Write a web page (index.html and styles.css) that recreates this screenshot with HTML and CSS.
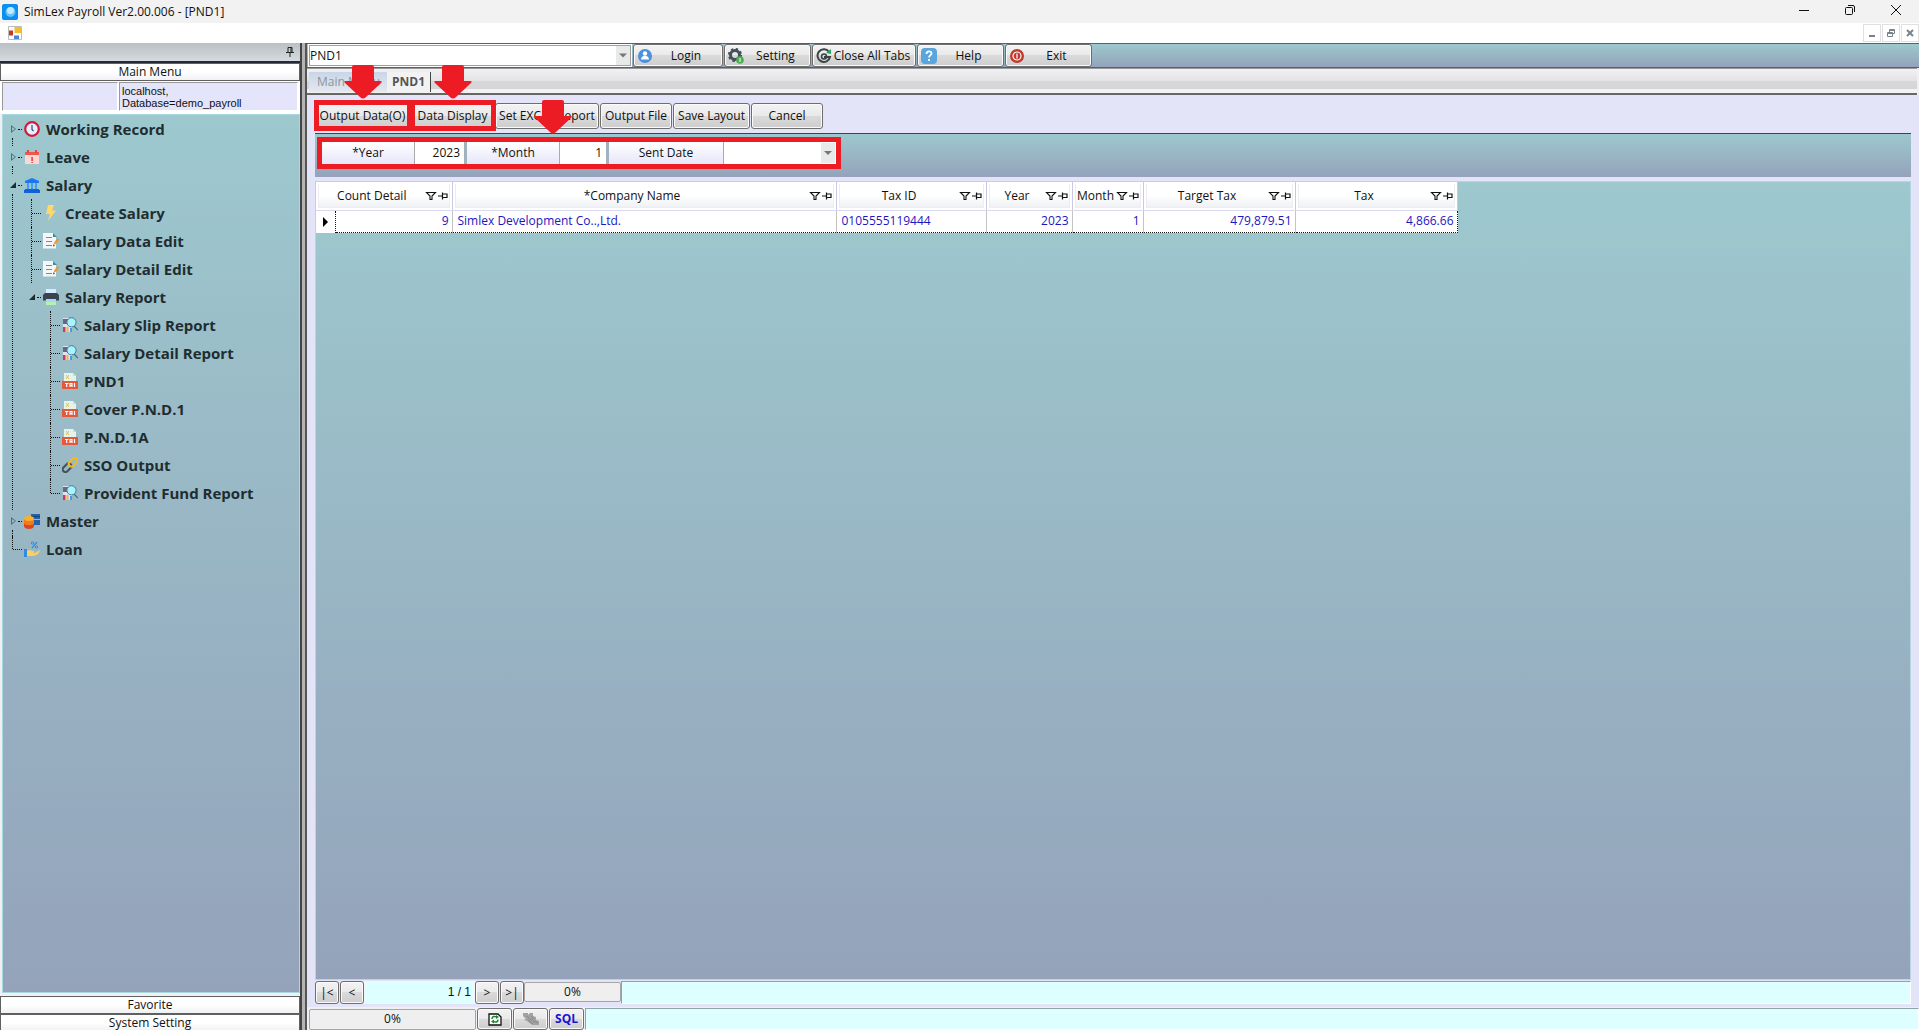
FILE: index.html
```html
<!DOCTYPE html>
<html lang="en">
<head>
  <meta charset="UTF-8">
  <meta name="viewport" content="width=device-width, initial-scale=1.0">
  <title>SimLex Payroll</title>
  <link rel="stylesheet" href="styles.css">
</head>
<body>
  <!-- shared icons -->
  <svg class="sprite" aria-hidden="true">
    <symbol id="i-clock" viewBox="0 0 16 16">
      <circle cx="8" cy="8" r="6.8" fill="#e8eefb" stroke="#d3183c" stroke-width="2.2"/>
      <path d="M8 4v4.500l1.500 1.500" fill="none" stroke="#2b4c70" stroke-width="1.200"/>
    </symbol>
    <symbol id="i-calendar" viewBox="0 0 16 16">
      <path d="M1 5h14v10H1z" fill="#fdd7d3"/>
      <path d="M1 3h14v3H1z" fill="#f0574f"/>
      <path d="M3 1h2v3H3zM11 1h2v3h-2zM7.300 8h1.600v4H7.300zM7.300 13h1.600v1H7.300z" fill="#e8453f"/>
    </symbol>
    <symbol id="i-bank" viewBox="0 0 16 16">
      <path d="M8 1l7 3v2H1V4z" fill="#1977f2"/>
      <path d="M3 6h2v6H3zM7 6h2v6H7zM11 6h2v6h-2z" fill="#3f9cff"/>
      <path d="M1 12h14v1h1v3H0v-3h1z" fill="#0f62d8"/>
    </symbol>
    <symbol id="i-bolt" viewBox="0 0 16 16">
      <path d="M5 0h6L9 5.500h4L5 16l2-7H3z" fill="#ffd868"/>
    </symbol>
    <symbol id="i-edit" viewBox="0 0 16 16">
      <path d="M0 0h10l3 3v12.500H0z" fill="#f4f6f7"/>
      <path d="M10 0l4 4h-4z" fill="#2f8f9b"/>
      <path d="M3 4.500h6M3 8.500h6M3 12.500h6" stroke="#7d8a92" stroke-width="1.200"/>
      <path d="M10.500 12l1-3 3-4 2 1.500-3.500 4z" fill="#f0962e"/>
      <path d="M10 13.500l.5-2 1.500 1z" fill="#333"/>
    </symbol>
    <symbol id="i-printer" viewBox="0 0 16 16">
      <path d="M3 0h10v5H3z" fill="#d9ecff"/>
      <path d="M2 4h12l2 2v5.500H0V6z" fill="#3b4350"/>
      <path d="M3 10h10v6H3z" fill="#a5d8f6"/>
      <path d="M3 13h10v3H3z" fill="#b9efb1"/>
    </symbol>
    <symbol id="i-report" viewBox="0 0 16 16">
      <path d="M1 1h9v14H1z" fill="#e3e1f0"/>
      <path d="M1 2h5v5H1z" fill="#6a6486"/>
      <path d="M1 10h2.500v5H1z" fill="#c93a62"/>
      <path d="M4.500 10h2v5h-2z" fill="#f3b33f"/>
      <path d="M8 11h2v4H8z" fill="#4698e6"/>
      <path d="M12 9l4 4" stroke="#44708a" stroke-width="1.200"/>
      <circle cx="9.500" cy="5.300" r="4.600" fill="#a9f3fb" stroke="#397d9b"/>
    </symbol>
    <symbol id="i-tax" viewBox="0 0 16 16">
      <path d="M2 0h9l3 3v7H2z" fill="#e6f3ea"/>
      <path d="M11 0l3 3h-3z" fill="#b8e0dd"/>
      <path d="M4 2l3 4M7 2L4 6" stroke="#d6c55c"/>
      <path d="M0 8h16v8H0z" fill="#e4593c"/>
      <path d="M3 10.500h3.500M4.700 10.500V14M8 14v-3.500h2V14M8 12.500h2M12.500 10v4" fill="none" stroke="#fff" stroke-width="1.200"/>
    </symbol>
    <symbol id="i-chain" viewBox="0 0 16 16">
      <rect x="0" y="8" width="10" height="5.500" rx="2.700" transform="rotate(-45 5 10.700)" fill="none" stroke="#47545b" stroke-width="2.200"/>
      <rect x="6" y="2.500" width="10" height="5.500" rx="2.700" transform="rotate(-45 11 5.200)" fill="none" stroke="#f6b921" stroke-width="2.200"/>
    </symbol>
    <symbol id="i-master" viewBox="0 0 16 16">
      <path d="M7 1h9v5H7zM9 7h7v5H9z" fill="#2361ab"/>
      <path d="M7 3h9v1H7z" fill="#174276"/>
      <path d="M0 6v7c0 4 10 4 10 0V6z" fill="#d8471f"/>
      <path d="M0 6v4c0 3 10 3 10 0V6z" fill="#f07a1d"/>
      <ellipse cx="5" cy="5.500" rx="5" ry="2.500" fill="#fbb02c"/>
    </symbol>
    <symbol id="i-loan" viewBox="0 0 16 16">
      <path d="M0 8h3v8H0z" fill="#2f8de0"/>
      <path d="M3 10c2-2 4 0 6 0s1 2 0 2c3 0 4-2 7-3-1 4-4 6-8 6H3z" fill="#f9cf63"/>
      <path d="M8 7l5-6" stroke="#2f8de0" stroke-width="1.200"/>
      <circle cx="8.500" cy="2" r="1.200" fill="none" stroke="#2f8de0"/>
      <circle cx="12.500" cy="6" r="1.200" fill="none" stroke="#2f8de0"/>
    </symbol>
    <symbol id="i-filter" viewBox="0 0 24 12">
      <path d="M1.500 2.500h9L7 6v3.500H5V6z" fill="none" stroke="#111" stroke-width="1.100"/>
      <path d="M13 6h4.500M17.500 2.500v7M17.500 4h4.500v3.500h-4.500" fill="none" stroke="#111" stroke-width="1.200"/>
    </symbol>
    <symbol id="i-arrow" viewBox="0 0 38 34" preserveAspectRatio="none">
      <path d="M10 0h18q2 0 2 2v14h6q3 0 1 2L22 32q-3 3-6 0L1 18q-2-2 1-2h6V2q0-2 2-2z" fill="#ed1c24"/>
    </symbol>
    <symbol id="i-drop" viewBox="0 0 8 4">
      <path d="M0 0h8L4 4z" fill="#777"/>
    </symbol>
  </svg>

  <header class="titlebar">
    <svg class="app-icon" viewBox="0 0 16 16" aria-hidden="true">
      <rect width="16" height="16" rx="2" fill="#0c8df0"/>
      <circle cx="8.500" cy="8" r="5" fill="#63c3fa"/>
      <circle cx="8.500" cy="6.500" r="3.500" fill="#bfeaff"/>
    </svg>
    <h1>SimLex Payroll Ver2.00.006 - [PND1]</h1>
    <div class="window-buttons">
      <button aria-label="Minimize"><svg viewBox="0 0 12 12"><path d="M1 6.500h10"/></svg></button>
      <button aria-label="Restore"><svg viewBox="0 0 12 12"><rect x="1.500" y="3.500" width="7" height="7" rx="1"/><path d="M4 1.500h5q1.500 0 1.500 1.500v5"/></svg></button>
      <button aria-label="Close"><svg viewBox="0 0 12 12"><path d="M1 1l10 10M11 1L1 11"/></svg></button>
    </div>
  </header>

  <div class="menubar">
    <svg class="form-icon" viewBox="0 0 14 14" aria-hidden="true">
      <path d="M.5.5h13v13H.5z" fill="#fff" stroke="#bbb"/>
      <path d="M1 4.500h4v5H1z" fill="#c23a2a"/>
      <path d="M6.500 1h6.500v6H6.500z" fill="#f3bd2f"/>
      <path d="M6 9.500h5V13H6z" fill="#4a86d8"/>
    </svg>
    <div class="child-buttons">
      <button aria-label="Minimize child"><svg viewBox="0 0 8 8"><path d="M1 7h6"/></svg></button>
      <button aria-label="Restore child"><svg viewBox="0 0 8 8"><path class="thin" d="M2.500 3V.5h5v4H6M.5 3.500h5v4h-5zM.5 4.500h5M2.500 1.500h5"/></svg></button>
      <button aria-label="Close child"><svg viewBox="0 0 8 8"><path d="M1 1l6 6M7 1L1 7"/></svg></button>
    </div>
  </div>

  <div class="workspace">
    <aside class="sidebar">
      <div class="dock-title">
        <button aria-label="Auto hide"><svg viewBox="0 0 8 10"><path d="M2 .5h4v5H2zM5 .5v5M0 5.500h8M4 6v4"/></svg></button>
      </div>
      <button class="group-bar">Main Menu</button>
      <div class="db-info">
        <div></div>
        <div>localhost,<br>Database=demo_payroll</div>
      </div>
      <nav class="tree">
        <ul>
          <li class="branch"><a href="#"><svg><use href="#i-clock"/></svg>Working Record</a></li>
          <li class="branch"><a href="#"><svg><use href="#i-calendar"/></svg>Leave</a></li>
          <li class="branch open"><a href="#"><svg><use href="#i-bank"/></svg>Salary</a>
            <ul>
              <li><a href="#"><svg><use href="#i-bolt"/></svg>Create Salary</a></li>
              <li><a href="#"><svg><use href="#i-edit"/></svg>Salary Data Edit</a></li>
              <li><a href="#"><svg><use href="#i-edit"/></svg>Salary Detail Edit</a></li>
              <li class="branch open"><a href="#"><svg><use href="#i-printer"/></svg>Salary Report</a>
                <ul>
                  <li><a href="#"><svg><use href="#i-report"/></svg>Salary Slip Report</a></li>
                  <li><a href="#"><svg><use href="#i-report"/></svg>Salary Detail Report</a></li>
                  <li><a href="#"><svg><use href="#i-tax"/></svg>PND1</a></li>
                  <li><a href="#"><svg><use href="#i-tax"/></svg>Cover P.N.D.1</a></li>
                  <li><a href="#"><svg><use href="#i-tax"/></svg>P.N.D.1A</a></li>
                  <li><a href="#"><svg><use href="#i-chain"/></svg>SSO Output</a></li>
                  <li><a href="#"><svg><use href="#i-report"/></svg>Provident Fund Report</a></li>
                </ul>
              </li>
            </ul>
          </li>
          <li class="branch"><a href="#"><svg><use href="#i-master"/></svg>Master</a></li>
          <li><a href="#"><svg><use href="#i-loan"/></svg>Loan</a></li>
        </ul>
      </nav>
      <button class="group-bar">Favorite</button>
      <button class="group-bar">System Setting</button>
    </aside>

    <main class="main">
      <div class="toolbar">
        <div class="combo screen-combo">
          <select aria-label="Screen"><option>PND1</option></select>
          <svg class="drop"><use href="#i-drop"/></svg>
        </div>
        <button class="btn w-90">
          <svg viewBox="0 0 16 16"><circle cx="8" cy="8" r="7" fill="#4a90dc"/><circle cx="8" cy="5.500" r="2.200" fill="#fff"/><path d="M4 11.500c0-5 8-5 8 0z" fill="#fff"/></svg>
          <span>Login</span>
        </button>
        <button class="btn w-87">
          <svg viewBox="0 0 16 16"><circle cx="7" cy="7" r="4.500" fill="none" stroke="#41525b" stroke-width="3"/><circle cx="7" cy="7" r="6.200" fill="none" stroke="#41525b" stroke-width="1.800" stroke-dasharray="2.400 2.470"/><circle cx="12" cy="12" r="3.800" fill="#4caf50"/><path d="M12 10v4" stroke="#fff"/></svg>
          <span>Setting</span>
        </button>
        <button class="btn w-103">
          <svg viewBox="0 0 16 16"><path d="M13 4A6.300 6.300 0 1 0 14 9H8" fill="none" stroke="#3c4246" stroke-width="2"/><circle cx="8" cy="8.500" r="2.500" fill="none" stroke="#3c4246" stroke-width="1.500"/><path d="M10 5l5-4v5z" fill="#1eae57"/></svg>
          <span>Close All Tabs</span>
        </button>
        <button class="btn w-87">
          <svg viewBox="0 0 16 16"><rect width="16" height="16" rx="4" fill="#5aa5dd"/><path d="M5.500 6c0-3.500 5-3.500 5-.5 0 2-2.500 1.800-2.500 4M8 11v2" fill="none" stroke="#fff" stroke-width="1.800"/></svg>
          <span>Help</span>
        </button>
        <button class="btn w-87">
          <svg viewBox="0 0 16 16"><circle cx="8" cy="8" r="7" fill="#c0392b"/><circle cx="8" cy="8" r="4" fill="none" stroke="#fff" stroke-width="1.200"/><path d="M8 5.500v5" stroke="#fff" stroke-width="1.200"/></svg>
          <span>Exit</span>
        </button>
      </div>

      <div class="tabs">
        <button class="tab">Main Menu</button>
        <button class="tab active">PND1</button>
      </div>

      <div class="page">
        <div class="actions">
          <span class="callout">
            <button class="btn w-95">Output Data(O)</button>
            <svg class="arrow"><use href="#i-arrow"/></svg>
          </span>
          <span class="callout">
            <button class="btn w-83">Data Display</button>
            <svg class="arrow"><use href="#i-arrow"/></svg>
          </span>
          <button class="btn w-103">Set EXCEL Report</button>
          <button class="btn w-73">Output File</button>
          <button class="btn w-77">Save Layout</button>
          <button class="btn w-73">Cancel</button>
        </div>

        <div class="filter">
          <div class="fields callout">
            <label for="year">*Year</label>
            <input id="year" type="text" value="2023">
            <label for="month">*Month</label>
            <input id="month" type="text" value="1">
            <label for="sent" class="wide">Sent Date</label>
            <div class="combo date-combo">
              <select id="sent"><option></option></select>
              <svg class="drop"><use href="#i-drop"/></svg>
            </div>
            <svg class="arrow"><use href="#i-arrow"/></svg>
          </div>
        </div>

        <div class="grid">
          <table>
            <colgroup>
              <col class="c-mark"><col class="c-count"><col class="c-company"><col class="c-taxid"><col class="c-year"><col class="c-month"><col class="c-target"><col class="c-tax">
            </colgroup>
            <thead>
              <tr>
                <th colspan="2"><div><span>Count Detail</span><svg><use href="#i-filter"/></svg></div></th>
                <th><div><span>*Company Name</span><svg><use href="#i-filter"/></svg></div></th>
                <th><div><span>Tax ID</span><svg><use href="#i-filter"/></svg></div></th>
                <th><div><span>Year</span><svg><use href="#i-filter"/></svg></div></th>
                <th><div><span>Month</span><svg><use href="#i-filter"/></svg></div></th>
                <th><div><span>Target Tax</span><svg><use href="#i-filter"/></svg></div></th>
                <th><div><span>Tax</span><svg><use href="#i-filter"/></svg></div></th>
              </tr>
            </thead>
            <tbody>
              <tr>
                <td class="mark"><svg viewBox="0 0 5 10"><path d="M0 0l5 5-5 5z"/></svg></td>
                <td class="num">9</td>
                <td>Simlex Development Co..,Ltd.</td>
                <td>0105555119444</td>
                <td class="num">2023</td>
                <td class="num">1</td>
                <td class="num">479,879.51</td>
                <td class="num">4,866.66</td>
              </tr>
            </tbody>
          </table>
        </div>

        <div class="pager">
          <button class="btn w-24">|&lt;</button>
          <button class="btn w-24">&lt;</button>
          <span class="position">1 / 1</span>
          <button class="btn w-24">&gt;</button>
          <button class="btn w-24">&gt;|</button>
          <span class="progress">0%</span>
          <span class="message"></span>
        </div>
      </div>

      <footer class="statusbar">
        <span class="progress wide">0%</span>
        <button class="btn w-35" aria-label="Refresh">
          <svg viewBox="0 0 16 16"><path d="M2 3h9l3 3v8H2z" fill="#fff" stroke="#111" stroke-width="1.300"/><path d="M5 8c0-3 3-3 4.500-2M11 8.500c0 3-3 3-4.500 2" fill="none" stroke="#128a28" stroke-width="1.500"/><path d="M9 4v4l3-2zM7 8.500v4l-3-2z" fill="#128a28"/></svg>
        </button>
        <button class="btn w-35" aria-label="Theme">
          <svg viewBox="0 0 16 14"><path d="M0 1h5v2l2-2h3v3l3 1v3l3 1v4H9L4 9 1 8l2-1-3-3z" fill="#a2a2a2"/><path d="M4 4l5 5M9 4l1 4M5 8l5 4M10 9l5 2" stroke="#888"/></svg>
        </button>
        <button class="btn w-35 sql">SQL</button>
        <span class="message"></span>
      </footer>
    </main>
  </div>
</body>
</html>
```
FILE: styles.css
```css
* {
  margin: 0;
  padding: 0;
  box-sizing: border-box;
}

body {
  height: 100vh;
  display: flex;
  flex-direction: column;
  overflow: hidden;
  background: #f0f0f0;
  font-family: "Open Sans", "Noto Sans", sans-serif;
  font-size: 12px;
  line-height: 16px;
  color: #111;
}

button,
input,
select {
  font: inherit;
  color: inherit;
}

.sprite {
  display: none;
}

/* window chrome */
.titlebar {
  height: 23px;
  flex: none;
  display: flex;
  align-items: center;
  gap: 6px;
  padding-left: 2px;
  background: #f2f2f2;
}

.app-icon {
  width: 16px;
  height: 16px;
}

.titlebar h1 {
  padding-top: 1px;
  font-size: 12px;
  font-weight: 400;
}

.window-buttons {
  display: flex;
  margin-left: auto;
}

.window-buttons button {
  width: 46px;
  height: 20px;
  border: 0;
  background: none;
}

.window-buttons svg {
  width: 12px;
  height: 12px;
  fill: none;
  stroke: #111;
}

.menubar {
  height: 20px;
  flex: none;
  display: flex;
  align-items: center;
  justify-content: space-between;
  padding-left: 8px;
  background: #fff;
}

.form-icon {
  width: 14px;
  height: 14px;
}

.child-buttons {
  display: flex;
  gap: 1px;
}

.child-buttons button {
  width: 18px;
  height: 18px;
  border: 1px solid #e0e0e0;
  background: #fff;
  line-height: 8px;
}

.child-buttons svg {
  width: 8px;
  height: 8px;
  fill: none;
  stroke: #77838c;
  stroke-width: 2;
}

.child-buttons .thin {
  stroke-width: 1;
}

.workspace {
  flex: 1;
  min-height: 0;
  display: flex;
  gap: 3px;
  background: #b4b4b4;
}

/* sidebar */
.sidebar {
  width: 302px;
  flex: none;
  display: flex;
  flex-direction: column;
  margin-bottom: -2px;
  border-right: 2px solid #444;
  background: #f0f0f0;
}

.dock-title {
  height: 20px;
  flex: none;
  display: flex;
  justify-content: flex-end;
  align-items: center;
  padding-right: 6px;
  background: linear-gradient(#b9bfc5, #d6dadd);
  border-bottom: 2px solid #232b3b;
}

.dock-title button {
  border: 0;
  background: none;
  line-height: 10px;
}

.dock-title svg {
  width: 8px;
  height: 10px;
  fill: none;
  stroke: #222;
}

.group-bar {
  height: 18px;
  flex: none;
  border: 1px solid #606060;
  background: linear-gradient(#fff 50%, #f0f1f4);
  line-height: 16px;
}

.db-info {
  flex: none;
  display: flex;
  gap: 1px;
  padding: 1px 2px 3px;
  background: #fff;
  font-family: "Liberation Sans", sans-serif;
  font-size: 11px;
  line-height: 12px;
}

.db-info div {
  width: 116px;
  height: 29px;
  padding: 2px;
  background: #e4e4fa;
  border: 1px solid #999;
  border-right-color: #fff;
  border-bottom-color: #fff;
}

.db-info div:last-child {
  flex: 1;
}

.tree {
  flex: 1;
  min-height: 0;
  margin: 0 0 3px 2px;
  border: 1px solid #a9d8e2;
  background: linear-gradient(#9dc8ce, #94a3ba);
  color: #1f2d30;
  font-size: 15px;
  font-weight: 700;
}

.tree ul {
  list-style: none;
  padding-left: 19px;
}

.tree > ul {
  padding-left: 2px;
}

.tree li {
  position: relative;
}

.tree a {
  height: 28px;
  display: flex;
  align-items: center;
  gap: 6px;
  padding-left: 19px;
  color: inherit;
  text-decoration: none;
  line-height: 20px;
}

.tree a svg {
  width: 16px;
  height: 16px;
}

/* dotted guide lines */
.tree li::before {
  content: "";
  position: absolute;
  left: 7px;
  top: 0;
  bottom: 0;
  border-left: 1px dotted #111;
}

.tree li:last-child::before {
  bottom: auto;
  height: 14px;
}

.tree li.branch::before {
  top: 23px;
  bottom: -3px;
}

.tree li.branch:last-child::before {
  display: none;
}

.tree a::before {
  content: "";
  position: absolute;
  left: 8px;
  top: 14px;
  width: 9px;
  border-top: 1px dotted #111;
}

.tree .branch > a::before {
  left: 13px;
  width: 4px;
}

/* expander triangles */
.tree .branch > a::after {
  content: "";
  position: absolute;
  left: 6px;
  top: 10px;
  width: 5px;
  height: 8px;
  background: #4c7076;
  clip-path: polygon(0 0, 100% 50%, 0 100%, 0 0, 1px 2px, 1px 6px, 4px 4px, 1px 2px);
}

.tree .open > a::after {
  left: 5px;
  top: 11px;
  width: 6px;
  height: 6px;
  background: #1c2b30;
  clip-path: polygon(100% 0, 100% 100%, 0 100%);
}

/* main area */
.main {
  flex: 1;
  min-width: 0;
  display: flex;
  flex-direction: column;
  border-left: 2px solid #555;
  background: #f0f0f4;
}

.toolbar {
  height: 25px;
  flex: none;
  display: flex;
  gap: 1px;
  padding: 0 1px;
  border-top: 1px solid #606060;
  border-bottom: 1px solid #606060;
  background: linear-gradient(#9dc8ce, #94a3ba);
}

.btn {
  display: flex;
  align-items: center;
  justify-content: center;
  flex: none;
  border: 1px solid #6e6e6e;
  border-radius: 3px;
  box-shadow: inset 0 0 0 1px #fafafa;
  background: linear-gradient(#f3f3f3, #e9e9e9 50%, #dadada 50%, #cdcdcd);
  white-space: nowrap;
}

.btn svg {
  width: 16px;
  height: 16px;
  flex: none;
}

.toolbar .btn {
  padding: 0 3px;
}

.toolbar .btn span {
  flex: 1;
}

.w-24 { width: 24px; }
.w-35 { width: 35px; }
.w-73 { width: 72px; }
.w-77 { width: 77px; }
.w-83 { width: 83px; }
.w-87 { width: 87px; }
.w-90 { width: 90px; }
.w-95 { width: 95px; }
.w-103 { width: 104px; }

.combo {
  position: relative;
  display: flex;
  background: #fff;
}

.combo select {
  flex: 1;
  appearance: none;
  border: 1px solid #a0a0a0;
  background: #fff;
}

.combo .drop {
  position: absolute;
  right: 1px;
  top: 1px;
  width: 14px;
  height: calc(100% - 2px);
  padding: 0 3px;
  background: #e8e9e9;
  pointer-events: none;
}

.screen-combo {
  width: 324px;
  border: 1px solid #fff;
}

.tabs {
  height: 27px;
  flex: none;
  display: flex;
  margin-right: 2px;
  padding: 3px 2px 1px;
  border-top: 1px solid #999;
  border-bottom: 2px solid #666;
  background: linear-gradient(#f1f1f4, #e3e3e6 50%, #d8d8db 50%, #d5d5d8 85%, #f2f2f2 85%);
}

.tab {
  width: 78px;
  border: 0;
  padding-left: 8px;
  background: linear-gradient(#c9d6e8, #e4e8ef);
  color: #8e949c;
  text-align: left;
}

.tab.active {
  width: 44px;
  padding-left: 5px;
  background: #f2f2f2;
  border-right: 1px solid #444;
  color: #555;
  font-weight: 700;
}

.page {
  flex: 1;
  min-height: 0;
  display: flex;
  flex-direction: column;
  padding: 8px 8px 3px;
  background: #e4e4f9;
}

.actions {
  display: flex;
  gap: 1px;
  margin-bottom: 4px;
}

.actions .btn {
  height: 26px;
}

/* red marks over the controls to use */
.callout {
  position: relative;
}

.callout::after {
  content: "";
  position: absolute;
  inset: -3px -2px -2px -1px;
  border: 5px solid #ed1c24;
  pointer-events: none;
}

.callout .arrow {
  position: absolute;
  z-index: 1;
  left: 50%;
  bottom: 100%;
  width: 38px;
  height: 34px;
  margin: 0 0 4px -19px;
  pointer-events: none;
}

.filter {
  flex: none;
  padding: 8px 7px 13px;
  border-top: 1px solid #2d4a55;
  background: linear-gradient(#9dc8ce, #94a3ba);
  display: flex;
}

.fields {
  display: flex;
  height: 22px;
}

.fields.callout::after {
  inset: -5px;
}

.fields .arrow {
  left: 45%;
  margin-bottom: 8px;
}

.fields label {
  width: 92px;
  background: linear-gradient(#fff, #e6e6fa);
  line-height: 22px;
  text-align: center;
}

.fields label.wide {
  width: 114px;
}

.fields input {
  width: 53px;
  border: 0;
  border-left: 1px solid #aaa;
  border-right: 3px solid #9fb2bd;
  background: #fff;
  padding-right: 4px;
  text-align: right;
}

.fields #month {
  width: 50px;
}

.date-combo {
  width: 113px;
  border-left: 1px solid #aaa;
}

.date-combo select {
  border: 0;
}

.grid {
  flex: 1;
  min-height: 0;
  margin-top: 4px;
  border: 1px solid #b5d6e6;
  background: linear-gradient(#9dc8ce, #94a3ba);
}

.grid table {
  width: 1141px;
  table-layout: fixed;
  border-collapse: collapse;
  background: #fff;
}

.c-mark { width: 19px; }
.c-count { width: 117px; }
.c-company { width: 384px; }
.c-taxid { width: 150px; }
.c-year { width: 86px; }
.c-month { width: 71px; }
.c-target { width: 152px; }
.c-tax { width: 162px; }

.grid th {
  height: 28px;
  padding: 2px;
  border-right: 1px solid #c9c9e6;
  border-bottom: 1px solid #d9d9f2;
  font-weight: 400;
}

.grid th div {
  height: 24px;
  display: flex;
  align-items: center;
  background: linear-gradient(#fff 50%, #eff1f4);
  border: 1px solid #ececf2;
  border-top: 0;
}

.grid th span {
  flex: 1;
  text-align: center;
  white-space: nowrap;
}

.grid th svg {
  width: 24px;
  height: 12px;
}

.grid td {
  height: 22px;
  padding: 0 5px 2px;
  border-top: 1px dotted #111;
  border-bottom: 1px dotted #111;
  border-right: 1px solid #c4c4c4;
  color: #1c16c0;
  white-space: nowrap;
}

.grid td.num {
  padding: 0 3px 2px;
  text-align: right;
}

.grid td:last-child {
  border-right: 1px dotted #111;
}

.grid td.mark {
  padding: 0 7px;
  border: 0;
  border-right: 1px dotted #111;
}

.mark svg {
  display: block;
  width: 5px;
  height: 10px;
}

.pager {
  height: 23px;
  flex: none;
  display: flex;
  margin-top: 1px;
}

.pager .btn + .btn {
  margin-left: 1px;
}

.position {
  width: 111px;
  padding: 2px 3px 0;
  background: #dff;
  border: 1px solid #f4f4ff;
  font-family: "Liberation Sans", sans-serif;
  text-align: right;
}

.progress {
  width: 97px;
  height: 20px;
  margin-top: 1px;
  border: 1px solid #a5a5a5;
  border-radius: 2px;
  background: #efefef;
  line-height: 18px;
  text-align: center;
}

.progress.wide {
  width: 167px;
  height: 21px;
}

.message {
  flex: 1;
  border: 1px solid #fff;
  border-top-color: #8fa3a8;
  border-left-color: #8fa3a8;
  background: #dff;
}

.statusbar {
  height: 23px;
  flex: none;
  display: flex;
  gap: 1px;
  padding: 1px 0 0 2px;
}

.sql {
  color: #1414d2;
  font-weight: 700;
}
```
